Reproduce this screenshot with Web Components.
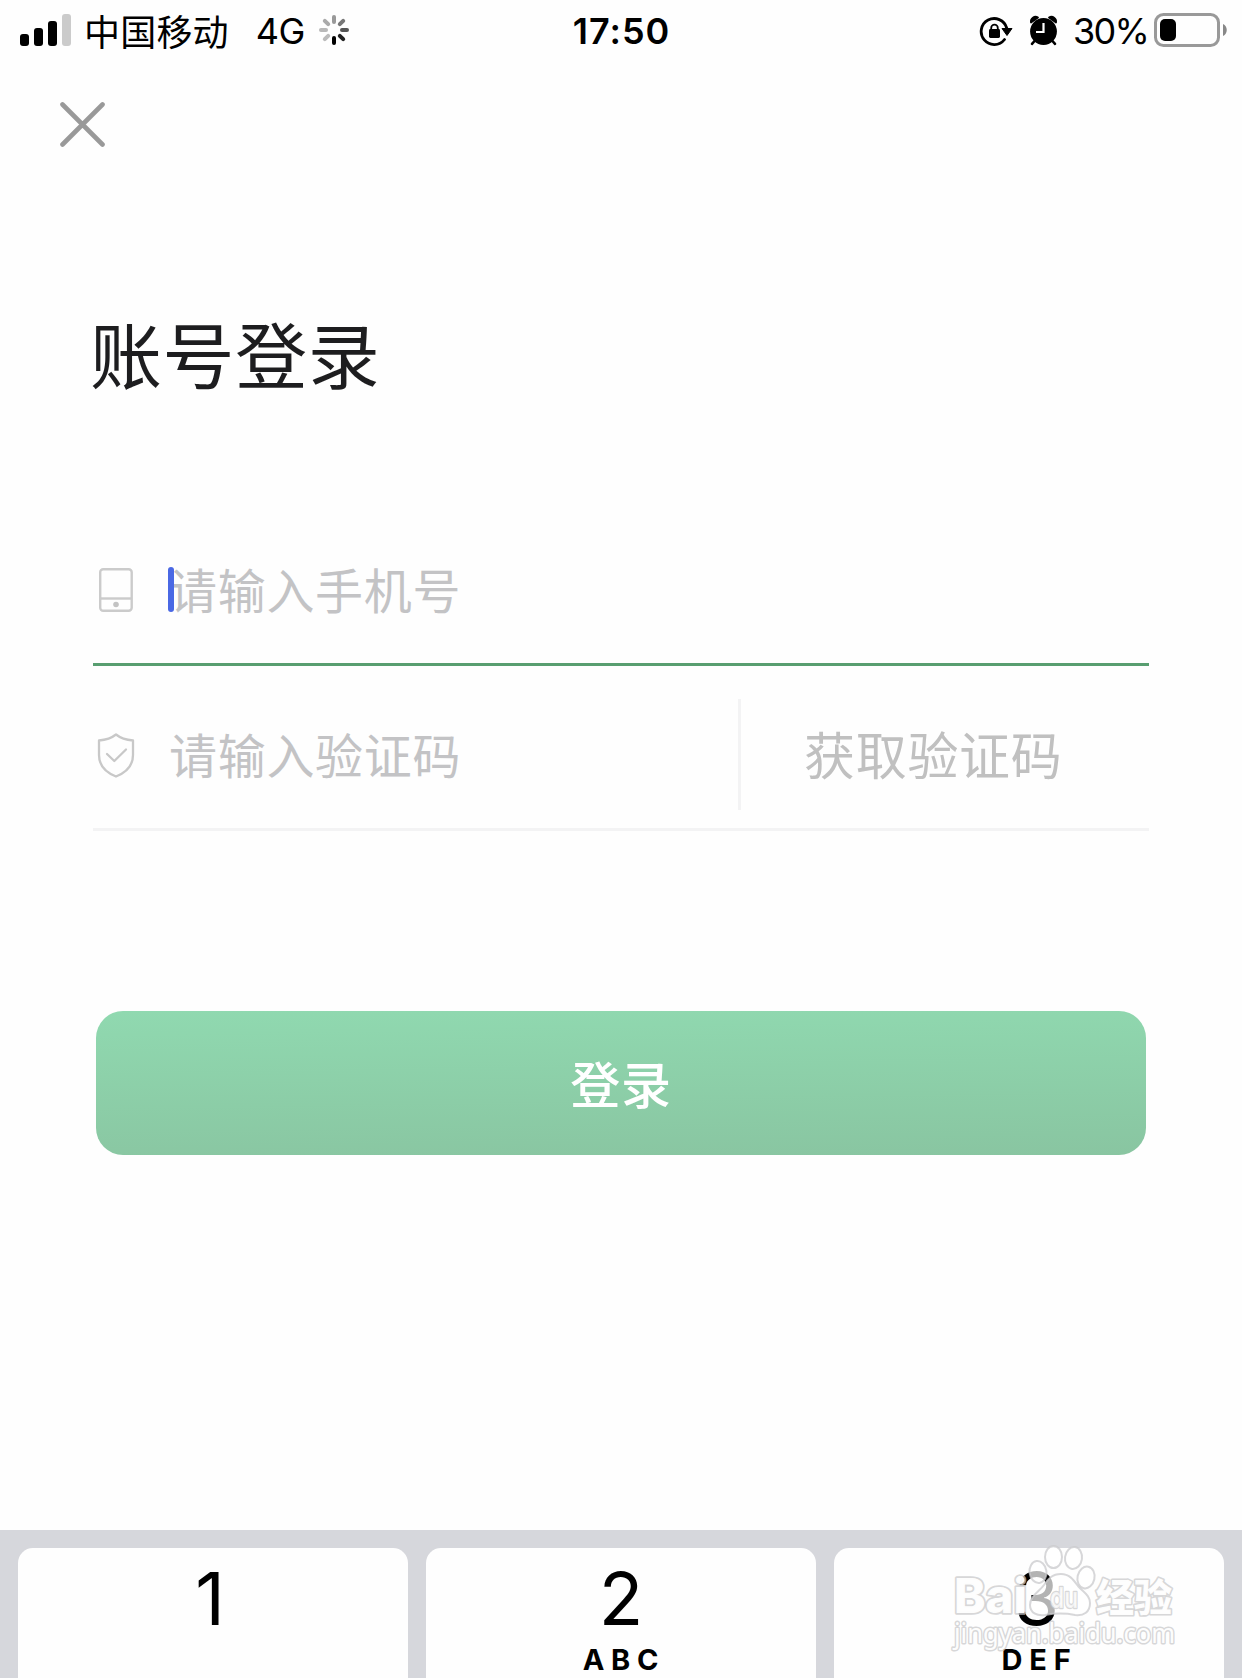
<!DOCTYPE html>
<html lang="zh-CN">
<head>
<meta charset="utf-8">
<title>账号登录</title>
<style>
html,body{margin:0;padding:0}
body{width:1242px;height:1678px;overflow:hidden;background:#fefefe;font-family:"Noto Sans CJK SC",sans-serif}
</style>
</head>
<body>
<login-screen></login-screen>
<script>
const define = (name, html) => customElements.define(name, class extends HTMLElement {
  constructor() {
    super();
    const t = document.createElement('template');
    t.innerHTML = html;
    this.attachShadow({ mode: 'open' }).appendChild(t.content.cloneNode(true));
  }
});

define('status-bar', `
<style>
:host{display:grid;grid-template-columns:1fr auto 1fr;height:62px;color:#000;font:400 36px/62px Inter,sans-serif}
div{display:flex;align-items:center;white-space:nowrap}
svg{display:block;flex:none}
.left{padding-left:20px}
.carrier{font-family:"Noto Sans CJK SC",sans-serif;line-height:61px;margin-left:12px;height:62px;letter-spacing:.2px}
.net{margin-left:27px;letter-spacing:-.6px}
.spin{margin-left:14px}
.time{font-weight:600;letter-spacing:1px;padding-left:1px}
.right{justify-content:flex-end;padding-right:15px}
.pct{margin-left:14px;letter-spacing:-1.700px;width:80px}
</style>
<div class="left">
<svg width="52" height="62"><g><rect y="34" width="9" height="12" rx="3"/><rect x="14" y="28" width="9" height="18" rx="3"/><rect x="28" y="21" width="9" height="25" rx="3"/><rect x="42" y="14" width="9" height="32" rx="3" fill="#cbcbcb"/></g></svg>
<span class="carrier">中国移动</span><span class="net">4G</span>
<svg class="spin" width="30" height="62" viewBox="-15 -30 30 62" stroke-width="4" stroke-linecap="round"><path d="M0-13V-8" stroke="#999"/><path d="M9.2-9.2 5.8-5.8" stroke="#777"/><path d="M13 0H8" stroke="#555"/><path d="M9.2 9.2 5.8 5.8" stroke="#222"/><path d="M0 13V8" stroke="#000"/><path d="M-9.2 9.2-5.8 5.8" stroke="#bbb"/><path d="M-13 0H-8" stroke="#b8b8b8"/><path d="M-9.2-9.2-5.8-5.8" stroke="#aaa"/></svg>
</div>
<div class="time">17:50</div>
<div class="right">
<svg width="80" height="62" viewBox="978 0 80 62">
<path d="M1003.500 39.500A13 13 0 1 1 1005.700 28" fill="none" stroke="#000" stroke-width="2.800" stroke-linecap="round"/>
<path d="M1001 28.500h10l-5 7z" stroke="#000" stroke-linejoin="round"/>
<rect x="988" y="29" width="11" height="9" rx="1.400"/><path d="M990.200 30v-2a3.300 3.300 0 0 1 6.600 0v2" fill="none" stroke="#000" stroke-width="1.800"/>
<circle cx="1042.500" cy="31.500" r="13.400"/>
<path d="M1030 22.500a4.700 4.700 0 0 1 7-5zM1055 22.500a4.700 4.700 0 0 0-7-5z" stroke="#000" stroke-width="1.800" stroke-linejoin="round"/>
<path d="M1034 40.500l-3 3.300M1051 40.500l3 3.300" stroke="#000" stroke-width="2.600" stroke-linecap="round"/>
<path d="M1042.500 23v9h-7.500" fill="none" stroke="#fff" stroke-width="2.200"/>
</svg>
<span class="pct">30%</span>
<svg width="74" height="62" viewBox="1152 0 74 62"><rect x="1154.500" y="14.500" width="63" height="31" rx="8" fill="none" stroke="#999" stroke-width="3"/><rect x="1159" y="19" width="16" height="22" rx="5"/><path d="M1222 24c5 2 5 10 0 12z" fill="#888"/></svg>
</div>`);

define('close-button', `
<style>:host{display:block;width:45px;height:45px}svg{display:block}</style>
<svg width="45" height="45"><path d="M2.500 2.500 42.500 42.500M42.500 2.500 2.500 42.500" stroke="#999" stroke-width="4.600" stroke-linecap="round"/></svg>`);

define('form-field', `
<style>
:host{display:flex;box-sizing:border-box;height:165px;padding:33px 0 18px;border-bottom:3px solid #f3f3f4}
:host([active]){border-bottom-color:#589e70}
.icon{flex:none;width:45px;display:flex;align-items:center;justify-content:center}
.caret{display:none;position:absolute;width:6px;height:45px;border-radius:3px;background:#4a68e4;margin:33px 0 0 75px}
:host([active]) .caret{display:block}
.hint{flex:1;margin-left:31px;font-size:48px;line-height:108px;letter-spacing:.7px;color:#c3c3c5;white-space:nowrap}
</style>
<div class="icon"><slot name="icon"></slot></div>
<span class="hint"><slot></slot></span>
<i class="caret"></i>
<slot name="action"></slot>`);

define('phone-icon', `
<style>:host,svg{display:block}</style>
<svg width="34" height="44" fill="none" stroke="#cbcbcb" stroke-width="2.400"><rect x="1.200" y="1.200" width="31.500" height="41.500" rx="3"/><path d="M1.200 30.500H32.700"/><circle cx="17" cy="36.500" r="2.800" fill="#c3c3c3" stroke="none"/></svg>`);

define('shield-icon', `
<style>:host,svg{display:block}</style>
<svg width="38" height="46" fill="none" stroke="#c8c8c8" stroke-width="2.300" stroke-linejoin="round" stroke-linecap="round"><path d="M19 2.500C14 6.500 8 8 2 8.500V23C2 33 9 40.500 19 44.500 29 40.500 36 33 36 23V8.500C30 8 24 6.500 19 2.500Z"/><path d="M10 22 17.300 29 29 17.500"/></svg>`);

define('code-button', `
<style>
:host{display:block;box-sizing:border-box;width:411px;border-left:3px solid #f3f3f4;padding-left:63px;font-size:51px;line-height:108px;letter-spacing:.7px;color:#c0c0c0;white-space:nowrap}
</style><slot></slot>`);

define('primary-button', `
<style>
:host{display:flex;justify-content:center;height:144px;border-radius:27px;background:linear-gradient(179deg,#90d9b0,#89c5a1);color:#fff;font-size:50px;font-weight:500;line-height:142px;letter-spacing:.7px}
</style><slot></slot>`);

define('keypad-key', `
<style>
:host{box-sizing:border-box;display:flex;flex-direction:column;align-items:center;height:160px;border-radius:15px;background:#fefefe;color:#000;font-family:Inter,sans-serif}
.digit{font-size:73px;line-height:74px;margin-top:14px}
.letters{font-size:29px;font-weight:700;line-height:30px;margin-top:8.500px;letter-spacing:6.800px;margin-right:-6px}
</style>
<span class="digit"><slot></slot></span><span class="letters"><slot name="letters"></slot></span>`);

define('number-pad', `
<style>
:host{display:grid;grid-template-columns:repeat(3,390px);box-sizing:border-box;gap:18px;height:148px;padding:18px 18px 0;background:#d6d7dc;overflow:hidden}
.first{padding-right:6px}
.last{padding-left:15px}
</style>
<keypad-key class="first">1</keypad-key>
<keypad-key>2<span slot="letters">ABC</span></keypad-key>
<keypad-key class="last">3<span slot="letters">DEF</span></keypad-key>`);

define('site-watermark', `
<style>
:host{display:block;position:absolute;left:940px;top:1538px}
svg{display:block}
text{paint-order:stroke;stroke-linejoin:round}
</style>
<svg width="250" height="120" viewBox="940 1538 250 120" fill="#fff" fill-opacity=".7" stroke="#cacacc" stroke-opacity=".75" stroke-width="2">
<ellipse cx="1038" cy="1572" rx="8.500" ry="11" transform="rotate(-8 1038 1572)"/>
<ellipse cx="1053.500" cy="1557" rx="8.500" ry="11"/>
<ellipse cx="1073.500" cy="1558" rx="8.500" ry="11" transform="rotate(8 1073.500 1558)"/>
<ellipse cx="1086" cy="1577.500" rx="8.500" ry="11" transform="rotate(12 1086 1577.500)"/>
<path d="M1061 1574c-9 0-13 5-17 11-5 7-14 11-14 20 0 8 7 11 15 10 11-2 20-2 30 0 9 1 15-3 15-12 0-8-7-11-12-17-5-7-9-12-17-12z"/>
<g font-family="Inter,sans-serif" font-weight="800">
<text x="954" y="1613" font-size="48" textLength="73" lengthAdjust="spacingAndGlyphs" stroke-width="3.600" fill-opacity=".97">Bai</text>
<text x="1050" y="1608" font-size="29" font-weight="600" textLength="28" lengthAdjust="spacingAndGlyphs" stroke-width="2.400">du</text>
</g>
<text x="1096" y="1611" font-family="Noto Sans CJK SC,sans-serif" font-weight="900" font-size="38" textLength="76" lengthAdjust="spacingAndGlyphs" stroke-width="3.200" fill-opacity=".97">经验</text>
<text x="954" y="1643" font-family="Noto Sans,sans-serif" font-size="27" textLength="221" lengthAdjust="spacingAndGlyphs" stroke-width="3" fill-opacity=".97">jingyan.baidu.com</text>
</svg>`);

define('login-screen', `
<style>
:host{display:flex;flex-direction:column;width:1242px;height:1678px;position:relative;overflow:hidden}
close-button{margin:40px 0 0 60px}
h1{margin:153px 0 0 90px;font-size:72px;font-weight:400;line-height:104px;letter-spacing:.6px;color:#1d1d1f}
form{margin:97px 93px 0}
primary-button{margin:180px 96px 0}
number-pad{margin-top:auto}
</style>
<status-bar></status-bar>
<close-button></close-button>
<h1>账号登录</h1>
<form>
<form-field active><phone-icon slot="icon"></phone-icon>请输入手机号</form-field>
<form-field><shield-icon slot="icon"></shield-icon>请输入验证码<code-button slot="action">获取验证码</code-button></form-field>
</form>
<primary-button>登录</primary-button>
<number-pad></number-pad>
<site-watermark></site-watermark>`);
</script>
</body>
</html>
